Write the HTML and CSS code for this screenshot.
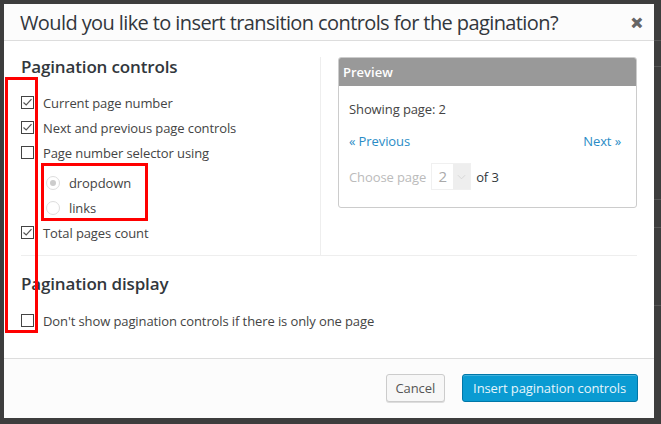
FILE: index.html
```html
<!DOCTYPE html>
<html>
<head>
<meta charset="utf-8">
<link rel="stylesheet" href="styles.css">
</head>
<body>
<div class="backdrop">
  <span class="bg-line l1"></span>
  <span class="bg-line l2"></span>
  <span class="bg-line l3"></span>
  <span class="bg-line l4"></span>
  <span class="bg-line l5"></span>
</div>
<div class="dialog">
  <div class="dlg-header">
    <h1 class="dlg-title">Would you like to insert transition controls for the pagination?</h1>
    <span class="dlg-close">✕</span>
  </div>
  <div class="dlg-body">
    <div class="top-row">
      <div class="left-col">
        <h2 class="section-title">Pagination controls</h2>
        <div class="opt-row"><span class="cb checked"><svg viewBox="0 0 13 13" width="13" height="13"><path d="M2.5 6.5 L5.2 9 L10.5 3.2" fill="none" stroke="#555" stroke-width="1.2"/></svg></span><span class="opt-label">Current page number</span></div>
        <div class="opt-row"><span class="cb checked"><svg viewBox="0 0 13 13" width="13" height="13"><path d="M2.5 6.5 L5.2 9 L10.5 3.2" fill="none" stroke="#555" stroke-width="1.2"/></svg></span><span class="opt-label">Next and previous page controls</span></div>
        <div class="opt-row"><span class="cb"></span><span class="opt-label">Page number selector using</span></div>
        <div class="radio-group">
          <div class="radio-row"><span class="radio sel"></span><span class="opt-label">dropdown</span></div>
          <div class="radio-row"><span class="radio"></span><span class="opt-label">links</span></div>
        </div>
        <div class="opt-row"><span class="cb checked"><svg viewBox="0 0 13 13" width="13" height="13"><path d="M2.5 6.5 L5.2 9 L10.5 3.2" fill="none" stroke="#555" stroke-width="1.2"/></svg></span><span class="opt-label">Total pages count</span></div>
      </div>
      <div class="preview">
        <div class="preview-head">Preview</div>
        <div class="preview-body">
          <div class="pv-line">Showing page: 2</div>
          <div class="pv-nav"><a class="pv-link">« Previous</a><a class="pv-link next">Next »</a></div>
          <div class="pv-choose">
            <span class="pv-muted">Choose page</span>
            <span class="pv-select"><span class="pv-val">2</span><span class="pv-arrow"><svg viewBox="0 0 10 6" width="9" height="6"><path d="M1 1 L5 5 L9 1" fill="none" stroke="#d4d4d4" stroke-width="1"/></svg></span></span>
            <span class="pv-of">of 3</span>
          </div>
        </div>
      </div>
    </div>
    <div class="bottom-sec">
      <h2 class="section-title">Pagination display</h2>
      <div class="opt-row"><span class="cb"></span><span class="opt-label">Don't show pagination controls if there is only one page</span></div>
    </div>
  </div>
  <div class="dlg-footer">
    <button class="btn btn-cancel">Cancel</button>
    <button class="btn btn-primary">Insert pagination controls</button>
  </div>
  <span class="mark mark-outer"></span>
  <span class="mark mark-inner"></span>
</div>
</body>
</html>
```

FILE: styles.css
```css
html, body {
  margin: 0;
  padding: 0;
}
body {
  background: #3d3d3d;
  width: 661px;
  height: 424px;
  overflow: hidden;
  position: relative;
  font-family: "Open Sans", "Liberation Sans", sans-serif;
}
.backdrop {
  position: absolute;
  inset: 0;
}
.bg-line {
  position: absolute;
  left: 640px;
  right: 0;
  height: 1px;
  background: #555;
}
.l1 { top: 40px; }
.l2 { top: 66px; }
.l3 { top: 199px; }
.l4 { top: 227px; }
.l5 { top: 305px; }

.dialog {
  position: relative;
  margin: 4px 0 0 4px;
  width: 650px;
  height: 414px;
  background: #fff;
  display: flex;
  flex-direction: column;
}
.dlg-header {
  height: 36px;
  flex: none;
  border-bottom: 1px solid #ddd;
  background: #fcfcfc;
  display: flex;
  align-items: center;
  justify-content: space-between;
  padding: 0 11px 0 16px;
}
.dlg-title {
  margin: 0;
  font-size: 20px;
  font-weight: 400;
  color: #32373c;
  letter-spacing: -0.6px;
  white-space: nowrap;
}
.dlg-close {
  font-size: 14px;
  font-weight: 700;
  color: #666;
  -webkit-text-stroke: 1.2px #666;
}
.dlg-body {
  flex: 1;
  padding: 16px 17px 0 17px;
}
.top-row {
  display: grid;
  grid-template-columns: 300px 299px;
  column-gap: 17px;
  border-bottom: 1px solid #eee;
  height: 198px;
}
.left-col {
  border-right: 1px solid #eee;
}
.section-title {
  margin: 0;
  font-size: 17px;
  line-height: 20px;
  font-weight: 600;
  color: #32373c;
  letter-spacing: -0.15px;
}
.left-col .section-title {
  margin-bottom: 13px;
}
.opt-row {
  display: flex;
  align-items: center;
  height: 25px;
}
.cb {
  width: 11px;
  height: 11px;
  border: 1px solid #444;
  background: #fff;
  margin-right: 9px;
  position: relative;
  flex: none;
}
.cb svg {
  position: absolute;
  left: -1px;
  top: -1px;
}
.opt-label {
  font-size: 13px;
  color: #444;
  letter-spacing: -0.1px;
}
.radio-group {
  padding: 5px 0 0 25px;
}
.radio-row {
  display: flex;
  align-items: center;
  height: 25px;
}
.radio {
  width: 12px;
  height: 12px;
  border: 1px solid #ddd;
  border-radius: 50%;
  margin-right: 9px;
  position: relative;
  background: #fff;
}
.radio.sel::after {
  content: "";
  position: absolute;
  left: 3px;
  top: 3px;
  width: 6px;
  height: 6px;
  border-radius: 50%;
  background: #ccc;
}
.preview {
  border: 1px solid #ccc;
  border-radius: 3px;
  height: 149px;
  overflow: hidden;
}
.preview-head {
  background: #999;
  color: #fff;
  font-size: 13px;
  font-weight: 600;
  height: 28px;
  line-height: 28px;
  padding-left: 4px;
}
.preview-body {
  padding: 13px 15px 0 10px;
  font-size: 13px;
  color: #444;
  letter-spacing: -0.1px;
}
.pv-line {
  line-height: 20px;
}
.pv-nav {
  display: flex;
  justify-content: space-between;
  margin-top: 12px;
  line-height: 20px;
}
.pv-link {
  color: #2a8cc6;
}
.pv-choose {
  display: flex;
  align-items: center;
  margin-top: 12px;
}
.pv-muted {
  color: #bbb;
  margin-right: 5px;
}
.pv-select {
  display: flex;
  height: 25px;
  border: 1px solid #f0f0f0;
  margin-right: 5px;
}
.pv-val {
  width: 21px;
  text-align: center;
  color: #aaa;
  line-height: 25px;
  font-size: 15px;
}
.pv-arrow {
  width: 17px;
  background: #eee;
  display: flex;
  align-items: center;
  justify-content: center;
}
.pv-of {
  color: #32373c;
}
.bottom-sec {
  padding-top: 18px;
}
.bottom-sec .section-title {
  margin-bottom: 14px;
}
.dlg-footer {
  flex: none;
  height: 59px;
  border-top: 1px solid #ddd;
  background: #fcfcfc;
  display: flex;
  align-items: center;
  justify-content: flex-end;
  gap: 17px;
  padding: 0 16px 0 0;
}
.btn {
  font-family: "Open Sans", "Liberation Sans", sans-serif;
  font-size: 13px;
  height: 28px;
  border-radius: 3px;
  padding: 0 10px;
  margin-top: -1px;
  white-space: nowrap;
  letter-spacing: -0.1px;
}
.btn-cancel {
  background: #f7f7f7;
  border: 1px solid #ccc;
  color: #555;
  padding: 0 9px;
  box-shadow: 0 1px 0 #ddd;
}
.btn-primary {
  background: #0a9bd2;
  border: 1px solid #0077a8;
  color: #e6f5fb;
  padding: 0 11px 0 10px;
  box-shadow: inset 0 1px 0 rgba(120,200,230,.5);
}
.mark {
  position: absolute;
  border: 3px solid #f00;
  pointer-events: none;
}
.mark-outer {
  left: 1px;
  top: 73px;
  width: 27px;
  height: 250px;
}
.mark-inner {
  left: 37px;
  top: 159px;
  width: 101px;
  height: 52px;
}
```
